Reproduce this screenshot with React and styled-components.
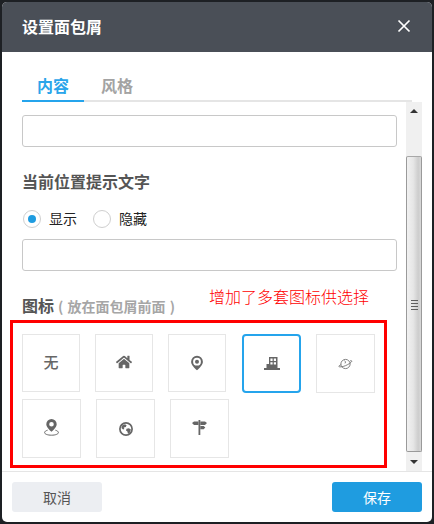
import styled, { createGlobalStyle } from 'styled-components';
import { FaHome } from 'react-icons/fa';

const GlobalStyle = createGlobalStyle`
  html, body {
    margin: 0;
    padding: 0;
    background: #1d2024;
  }
  body {
    font-family: "Noto Sans CJK SC", "Liberation Sans", sans-serif;
  }
`;

const Page = styled.div`
  width: 434px;
  height: 524px;
  padding: 2px;
  box-sizing: border-box;
  overflow: hidden;
`;

const Dialog = styled.div`
  position: relative;
  width: 430px;
  height: 520px;
  display: flex;
  flex-direction: column;
  background: #fff;
  border-radius: 5px;
  overflow: hidden;
`;

const Header = styled.div`
  flex: none;
  height: 50px;
  padding: 0 20px 2px;
  box-sizing: border-box;
  display: flex;
  align-items: center;
  justify-content: space-between;
  background: #4a4f57;
  color: #fff;
  font-size: 16px;
  font-weight: 700;
`;

const CloseIcon = styled.svg`
  width: 14px;
  height: 14px;
  margin-right: 1px;
  stroke: #fff;
  stroke-width: 1.7;
`;

const Tabs = styled.div`
  flex: none;
  width: 390px;
  height: 50px;
  margin-left: 20px;
  box-sizing: border-box;
  display: flex;
  align-items: flex-end;
  border-bottom: 2px solid #e5e5e5;
`;

const Tab = styled.div`
  width: ${(p) => p.$width}px;
  height: 30px;
  margin-bottom: -2px;
  box-sizing: content-box;
  padding-left: ${(p) => p.$indent}px;
  font-size: 16px;
  font-weight: 700;
  line-height: 30px;
  color: ${(p) => (p.$active ? '#2aa5ea' : '#a3a3a3')};
  border-bottom: 2px solid ${(p) => (p.$active ? '#25a4ec' : 'transparent')};
`;

const Body = styled.div`
  flex: none;
  height: 369px;
  display: flex;
`;

const Fields = styled.div`
  flex: none;
  width: 404px;
  padding: 13px 9px 0 20px;
  box-sizing: border-box;
`;

const TextInput = styled.div`
  height: 32px;
  box-sizing: border-box;
  border: 1px solid #c8c8c8;
  border-radius: 3px;
  background: #fff;
  margin-top: ${(p) => p.$top || 0}px;
`;

const SectionTitle = styled.div`
  height: 24px;
  margin-top: 23px;
  font-size: 16px;
  font-weight: 700;
  line-height: 22px;
  color: #555;
  white-space: nowrap;
`;

const Hint = styled.span`
  margin-left: 4px;
  font-size: 14px;
  font-weight: 700;
  word-spacing: 1px;
  color: #a6a6a6;
`;

const RadioRow = styled.div`
  height: 18px;
  margin-top: 16px;
  padding-left: 1px;
  display: flex;
  align-items: center;
`;

const Radio = styled.span`
  width: 18px;
  height: 18px;
  box-sizing: border-box;
  border: 1px solid #cfcfcf;
  border-radius: 50%;
  display: flex;
  align-items: center;
  justify-content: center;
  background: #fff;

  &::after {
    content: '';
    display: ${(p) => (p.$checked ? 'block' : 'none')};
    width: 8px;
    height: 8px;
    border-radius: 50%;
    background: #1f9ce0;
  }
`;

const RadioText = styled.span`
  width: 44px;
  margin-left: 8px;
  font-size: 14px;
  line-height: 16px;
  margin-bottom: 2px;
  color: #222;
`;

const IconRows = styled.div`
  margin-top: 16px;
  display: flex;
  flex-direction: column;
  gap: 6px;
`;

const IconRow = styled.div`
  display: flex;
  gap: 15px;
`;

const Tile = styled.div`
  flex: none;
  width: ${(p) => p.$size}px;
  height: ${(p) => p.$height}px;
  margin-left: ${(p) => p.$shift || 0}px;
  box-sizing: border-box;
  display: flex;
  align-items: center;
  justify-content: center;
  color: #666;
  font-size: 15px;
  font-weight: 500;
  border: ${(p) => (p.$selected ? '2px solid #25a4ec' : '1px solid #e6e6e6')};
  border-radius: ${(p) => (p.$selected ? '4px' : '0')};

  svg {
    display: block;
  }
`;

const NoneLabel = styled.span`
  line-height: 16px;
  margin-bottom: 2px;
`;

const Scrollbar = styled.div`
  flex: none;
  width: 16px;
  display: flex;
  flex-direction: column;
  background: #f0f0f0;
`;

const ScrollTrack = styled.div`
  flex: none;
  height: 54px;
  display: flex;
  justify-content: center;
  padding-top: 7px;
  box-sizing: border-box;
`;

const ArrowUp = styled.span`
  width: 0;
  height: 0;
  border-left: 4px solid transparent;
  border-right: 4px solid transparent;
  border-bottom: 4px solid #333;
`;

const ArrowDown = styled.span`
  width: 0;
  height: 0;
  border-left: 4px solid transparent;
  border-right: 4px solid transparent;
  border-top: 4px solid #333;
`;

const ScrollThumb = styled.div`
  flex: none;
  height: 296px;
  box-sizing: border-box;
  padding-top: 143px;
  border: 1px solid #9a9a9a;
  border-top-color: #a8a8a8;
  border-radius: 2px;
  background: linear-gradient(90deg, #f1f1f1 0%, #e6e6e6 45%, #cdcdcd 80%, #d8d8d8 100%);
  display: flex;
  flex-direction: column;
  align-items: center;
  gap: 2px;
`;

const Grip = styled.span`
  width: 7px;
  height: 1px;
  background: #5f5f5f;
`;

const ScrollBottom = styled.div`
  flex: 1;
  display: flex;
  justify-content: center;
  align-items: center;
`;

const Footer = styled.div`
  flex: 1;
  padding: 10px 10px 0;
  display: flex;
  justify-content: space-between;
  align-items: flex-start;
  border-top: 1px solid #e5e5e5;
`;

const Button = styled.div`
  width: 90px;
  height: 30px;
  border-radius: 3px;
  display: flex;
  align-items: center;
  justify-content: center;
  font-size: 14px;
  color: ${(p) => (p.$primary ? '#fff' : '#555')};
  background: ${(p) => (p.$primary ? '#1f9ce0' : '#eceef2')};
`;

const RedFrame = styled.div`
  position: absolute;
  left: 8px;
  top: 318px;
  width: 377px;
  height: 148px;
  box-sizing: border-box;
  border: 3px solid #f00;
`;

const RedNote = styled.div`
  position: absolute;
  left: 207px;
  top: 282px;
  font-size: 16px;
  line-height: 24px;
  font-weight: 300;
  color: #f00;
  white-space: nowrap;
`;

const Pin = () => (
  <svg width="14" height="16" viewBox="0 0 14 16">
    <path
      fill="#666"
      fillRule="evenodd"
      d="M7 .8a5.9 5.9 0 0 0-5.9 5.9c0 3.2 3.4 6.2 5.9 8.6 2.5-2.4 5.9-5.4 5.9-8.6A5.9 5.9 0 0 0 7 .8zm0 2a3.9 3.9 0 1 1 0 7.8 3.9 3.9 0 0 1 0-7.8z"
    />
    <circle cx="7" cy="6.7" r="2" fill="#666" />
  </svg>
);

const Building = () => (
  <svg width="16" height="13" viewBox="0 0 16 13" style={{ marginTop: -1 }}>
    <path
      fill="#666"
      fillRule="evenodd"
      d="M5 0h8.5v11.5H5zM6.4 1.6v2.4h2.2V1.6zm3.4 0v2.4h2.2V1.6zM6.4 5.2v2.4h2.2V5.2zm3.4 0v2.4h2.2V5.2z"
    />
    <path fill="#666" d="M2.5 7H5v4.5H2.5zM0 11h16v2H0z" />
  </svg>
);

const Planet = () => (
  <svg width="15" height="12" viewBox="0 0 16 13" fill="none" stroke="#777" strokeWidth="1">
    <circle cx="8" cy="6.5" r="5" />
    <path d="M3.2 7.2C1.6 8 .5 8.6.8 9.2c.5.8 3.8.5 7.2-.9s6.6-3.8 6.9-4.8c.1-.5-.6-.7-1.9-.5" />
    <path d="M6.5 2.6l1.6 1.6-.6 1.6" />
  </svg>
);

const PinOnRing = () => (
  <svg width="15" height="17" viewBox="0 0 15 17" style={{ marginTop: -2 }}>
    <path
      fill="#666"
      fillRule="evenodd"
      d="M7.5 0a5.2 5.2 0 0 0-5.2 5.2c0 2.8 3 5.5 5.2 7.6 2.2-2.1 5.2-4.8 5.2-7.6A5.2 5.2 0 0 0 7.5 0zm0 2.9a2.3 2.3 0 1 1 0 4.6 2.3 2.3 0 0 1 0-4.6z"
    />
    <path
      fill="none"
      stroke="#666"
      d="M3.6 11.2C1.8 11.7.6 12.5.6 13.6c0 1.5 3.1 2.6 6.9 2.6s6.9-1.1 6.9-2.6c0-1.1-1.2-1.9-3-2.4"
    />
  </svg>
);

const Globe = () => (
  <svg width="14" height="14" viewBox="0 0 14 14">
    <circle cx="7" cy="7" r="6.1" fill="none" stroke="#666" strokeWidth="1.7" />
    <path fill="#666" d="M3 3.5l3-1.2 1.6 1-.8 1.6-2 .5.5 1.5-1.2.6L2.4 6zM7.5 6.8l2.4-.6 2 1.2-.9 3-2 1.6-.6-2.4-1.4-1.2z" />
  </svg>
);

const SignPost = () => (
  <svg width="15" height="15" viewBox="0 0 15 15" style={{ marginTop: -2 }}>
    <path fill="#666" d="M6.5 0h1.8v15H6.5z" />
    <path fill="#666" d="M6.5 1.4H2L0 3l2 1.9h4.5zM8.3 1.4h4.7L15 3l-2 1.9H8.3zM8.3 6h3.4l1.6 1.6-1.6 1.6H8.3z" />
  </svg>
);

export default function App() {
  return (
    <Page>
      <GlobalStyle />
      <Dialog>
        <Header>
          <span>设置面包屑</span>
          <CloseIcon viewBox="0 0 14 14">
            <path d="M1.5 1.5l11 11M12.5 1.5l-11 11" />
          </CloseIcon>
        </Header>

        <Tabs>
          <Tab $active $width={47} $indent={15}>内容</Tab>
          <Tab $width={50} $indent={17}>风格</Tab>
        </Tabs>

        <Body>
          <Fields>
            <TextInput />
            <SectionTitle>当前位置提示文字</SectionTitle>
            <RadioRow>
              <Radio $checked />
              <RadioText>显示</RadioText>
              <Radio />
              <RadioText>隐藏</RadioText>
            </RadioRow>
            <TextInput $top={11} />
            <SectionTitle>
              图标<Hint>( 放在面包屑前面 )</Hint>
            </SectionTitle>
            <IconRows>
              <IconRow>
                <Tile $size={58} $height={58}><NoneLabel>无</NoneLabel></Tile>
                <Tile $size={58} $height={58}>
                  <FaHome size={16} style={{ marginTop: -3 }} />
                </Tile>
                <Tile $size={58} $height={58}><Pin /></Tile>
                <Tile $size={59} $height={59} $shift={1} $selected><Building /></Tile>
                <Tile $size={59} $height={59}><Planet /></Tile>
              </IconRow>
              <IconRow>
                <Tile $size={59} $height={59}><PinOnRing /></Tile>
                <Tile $size={59} $height={59}><Globe /></Tile>
                <Tile $size={59} $height={59}><SignPost /></Tile>
              </IconRow>
            </IconRows>
          </Fields>

          <Scrollbar>
            <ScrollTrack>
              <ArrowUp />
            </ScrollTrack>
            <ScrollThumb>
              <Grip />
              <Grip />
              <Grip />
              <Grip />
            </ScrollThumb>
            <ScrollBottom>
              <ArrowDown />
            </ScrollBottom>
          </Scrollbar>
        </Body>

        <Footer>
          <Button>取消</Button>
          <Button $primary>保存</Button>
        </Footer>

        <RedNote>增加了多套图标供选择</RedNote>
        <RedFrame />
      </Dialog>
    </Page>
  );
}
